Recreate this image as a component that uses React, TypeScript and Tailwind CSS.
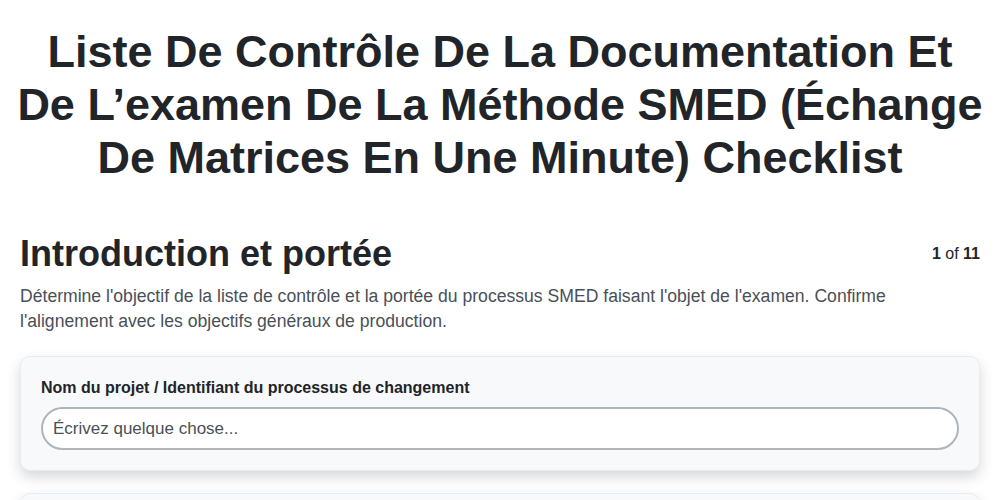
const FIELDS = [
  { id: 'projet', label: 'Nom du projet / Identifiant du processus de changement' },
  { id: 'equipe', label: 'Équipe responsable' },
];

function Field({ label }: { label: string }) {
  return (
    <div className="rounded-[10px] border border-[#e9ecef] bg-[#f8f9fa] p-5 shadow-[0_6px_14px_rgba(0,0,0,0.16)]">
      <label className="mb-2 block text-base font-bold leading-[22px] text-[#212529]">{label}</label>
      <input
        type="text"
        placeholder="Écrivez quelque chose..."
        className="block h-[43px] w-full rounded-full border-2 border-[#adb5bd] bg-white px-2.5 text-[17px] text-[#212529] outline-none placeholder:text-[#495057]"
      />
    </div>
  );
}

export default function App() {
  return (
    <div className="min-h-screen bg-white px-5 pt-[25px] font-['Liberation_Sans',Arial,sans-serif] text-[#212529]">
      <h1 className="-mx-[3px] text-center text-[45px] font-bold leading-[53px]">
        Liste De Contrôle De La Documentation Et De L’examen De La Méthode SMED (Échange De Matrices En Une Minute)
        Checklist
      </h1>

      <div className="mt-[48px] flex items-center justify-between">
        <h2 className="text-[36px] font-bold leading-[1.2]">Introduction et portée</h2>
        <div className="text-base leading-6">
          <span className="font-bold">1</span> of <span className="font-bold">11</span>
        </div>
      </div>
      <p className="mt-[9px] mb-[22px] text-[17.6px] leading-[25px] text-[#495057]">
        Détermine l'objectif de la liste de contrôle et la portée du processus SMED faisant l'objet de l'examen. Confirme
        l'alignement avec les objectifs généraux de production.
      </p>

      <div className="flex flex-col gap-[22px] pb-8">
        {FIELDS.map((f) => (
          <Field key={f.id} label={f.label} />
        ))}
      </div>
    </div>
  );
}
